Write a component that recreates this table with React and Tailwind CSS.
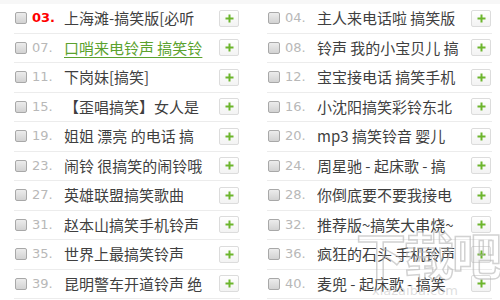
import React from "react";

const left = [
  { n: "03.", t: "上海滩-搞笑版[必听", hot: true },
  { n: "07.", t: "口哨来电铃声 搞笑铃", link: true },
  { n: "11.", t: "下岗妹[搞笑]" },
  { n: "15.", t: "【歪唱搞笑】女人是" },
  { n: "19.", t: "姐姐 漂亮 的电话 搞" },
  { n: "23.", t: "闹铃 很搞笑的闹铃哦" },
  { n: "27.", t: "英雄联盟搞笑歌曲" },
  { n: "31.", t: "赵本山搞笑手机铃声" },
  { n: "35.", t: "世界上最搞笑铃声" },
  { n: "39.", t: "昆明警车开道铃声 绝" },
];

const right = [
  { n: "04.", t: "主人来电话啦 搞笑版" },
  { n: "08.", t: "铃声 我的小宝贝儿 搞" },
  { n: "12.", t: "宝宝接电话 搞笑手机" },
  { n: "16.", t: "小沈阳搞笑彩铃东北" },
  { n: "20.", t: "mp3 搞笑铃音 婴儿" },
  { n: "24.", t: "周星驰 - 起床歌 - 搞" },
  { n: "28.", t: "你倒底要不要我接电" },
  { n: "32.", t: "推荐版~搞笑大串烧~" },
  { n: "36.", t: "疯狂的石头 手机铃声" },
  { n: "40.", t: "麦兜 - 起床歌 - 搞笑" },
];

function Row({ item }) {
  return (
    <div className="flex items-center h-[29.5px] border-b border-[#ececec]">
      <span className="ml-[1px] w-[12px] h-[12px] rounded-[2px] border border-[#a8a8a8] bg-gradient-to-b from-[#ececec] to-[#d2d2d2] shrink-0" />
      <span
        className={`ml-[5px] w-[32px] shrink-0 text-[13px] leading-[16px] font-['DejaVu_Sans',sans-serif] ${
          item.hot ? "text-[#ff0000] font-bold" : "text-[#b8b8b8]"
        }`}
      >
        {item.n}
      </span>
      <span
        className={`w-[152px] overflow-hidden whitespace-nowrap text-[15px] leading-[22px] font-['Noto_Sans_CJK_SC',sans-serif] ${
          item.link ? "text-[#5ba22e] underline underline-offset-[3px]" : "text-[#3f3f3f]"
        }`}
      >
        {item.t}
      </span>
      <span className="ml-auto mr-[1px] w-[20px] h-[17px] flex items-center justify-center border border-[#dcdcdc] rounded-[2px] bg-gradient-to-b from-white to-[#f3f3f3]">
        <svg width="9" height="9" viewBox="0 0 9 9">
          <path d="M4.5 0.5v8M0.5 4.5h8" stroke="#6cb52c" strokeWidth="2" />
        </svg>
      </span>
    </div>
  );
}

export default function App() {
  return (
    <div className="relative w-[500px] h-[300px] overflow-hidden bg-white">
      <div className="h-[4px] bg-[#f7f7f7]" />
      <div className="flex">
        <div className="ml-[14px] w-[226px]">
          {left.map((it) => (
            <Row key={it.n} item={it} />
          ))}
        </div>
        <div className="ml-[27px] w-[225px]">
          {right.map((it) => (
            <Row key={it.n} item={it} />
          ))}
        </div>
      </div>

      {/* watermark */}
      <div className="absolute left-[356px] top-[228px] pointer-events-none text-[50px] leading-none tracking-[-2px] text-white/0 [-webkit-text-stroke:1.5px_rgba(180,180,180,0.6)] font-['Noto_Sans_CJK_SC',sans-serif] font-bold">
        下载吧
      </div>
      <div className="absolute left-[372px] top-[284px] pointer-events-none text-[13px] leading-none text-[#d0d0d0]/70 font-['DejaVu_Sans',sans-serif]">
        xiazaiba.com
      </div>
    </div>
  );
}
